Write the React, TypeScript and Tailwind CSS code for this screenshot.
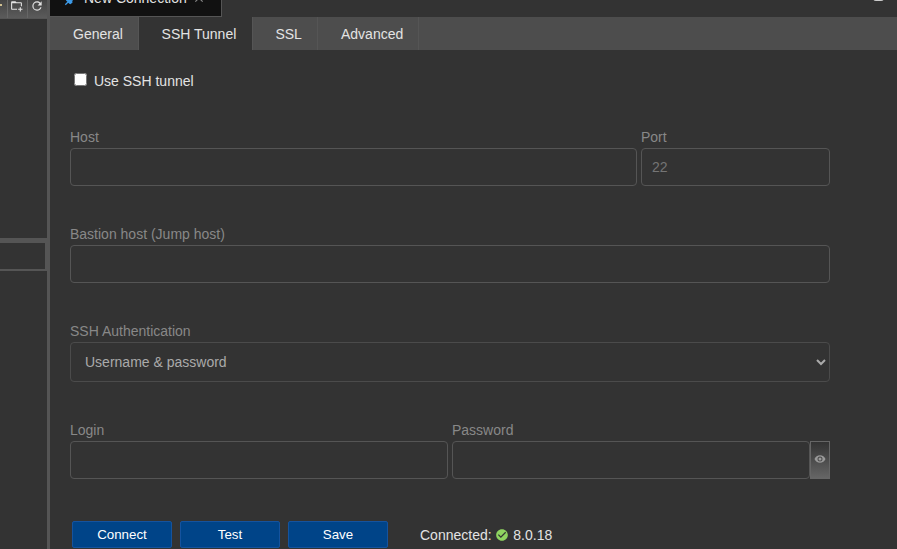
import React from 'react';

const paths = {
  check:
    'M12 2C6.5 2 2 6.5 2 12S6.5 22 12 22 22 17.5 22 12 17.5 2 12 2M10 17L5 12L6.41 10.59L10 14.17L17.59 6.58L19 8L10 17Z',
  eye: 'M12,9A3,3 0 0,0 9,12A3,3 0 0,0 12,15A3,3 0 0,0 15,12A3,3 0 0,0 12,9M12,17A5,5 0 0,1 7,12A5,5 0 0,1 12,7A5,5 0 0,1 17,12A5,5 0 0,1 12,17M12,4.5C7,4.5 2.73,7.61 1,12C2.73,16.39 7,19.5 12,19.5C17,19.5 21.27,16.39 23,12C21.27,7.61 17,4.5 12,4.5Z',
  refresh:
    'M17.65,6.35C16.2,4.9 14.21,4 12,4A8,8 0 0,0 4,12A8,8 0 0,0 12,20C15.73,20 18.84,17.45 19.73,14H17.65C16.83,16.33 14.61,18 12,18A6,6 0 0,1 6,12A6,6 0 0,1 12,6C13.66,6 15.14,6.69 16.22,7.78L13,11H20V4L17.65,6.35Z',
  folderPlus:
    'M13 19C13 19.34 13.04 19.67 13.09 20H4C2.9 20 2 19.11 2 18V6C2 4.89 2.89 4 4 4H10L12 6H20C21.1 6 22 6.89 22 8V13.81C21.39 13.46 20.72 13.22 20 13.09V8H4V18H13.09C13.04 18.33 13 18.66 13 19M20 18V15H18V18H15V20H18V23H20V20H23V18H20Z',
  plug: 'M21.4,7.5C22.2,8.3 22.2,9.6 21.4,10.3L18.6,13.1L10.8,5.3L13.6,2.5C14.4,1.7 15.7,1.7 16.4,2.5L18.2,4.3L21.2,1.3L22.6,2.7L19.6,5.7L21.4,7.5M15.6,13.3L14.2,11.9L11.4,14.7L9.3,12.6L12.1,9.8L10.7,8.4L7.9,11.2L6.4,9.8L3.6,12.6C2.8,13.4 2.8,14.7 3.6,15.4L5.4,17.2L1.4,21.2L2.8,22.6L6.8,18.6L8.6,20.4C9.4,21.2 10.7,21.2 11.4,20.4L14.2,17.6L12.8,16.2L15.6,13.3Z',
  close:
    'M19,6.41L17.59,5L12,10.59L6.41,5L5,6.41L10.59,12L5,17.59L6.41,19L12,13.41L17.59,19L19,17.59L13.41,12L19,6.41Z',
};

function Icon({ name, className }: { name: keyof typeof paths; className: string }) {
  return (
    <svg viewBox="0 0 24 24" fill="currentColor" className={`shrink-0 ${className}`}>
      <path d={paths[name]} />
    </svg>
  );
}

function Field({ label, className, children }: { label: string; className: string; children: React.ReactNode }) {
  return (
    <label className={`flex flex-col ${className}`}>
      <span className="mb-[3px] h-4 leading-4 text-[#888]">{label}</span>
      {children}
    </label>
  );
}

const inputClass =
  'h-[38px] min-w-0 rounded border border-[#555] bg-transparent px-2.5 text-[#e3e3e3] placeholder:text-[#757575] outline-none';

const toolClass =
  'flex h-[18px] shrink-0 items-start justify-center border-r border-[#666] bg-linear-to-b from-[#444] to-[#5b5b5b] text-[#e3e3e3]';

function Sidebar() {
  return (
    <aside className="flex w-[50px] shrink-0 flex-col border-r-3 border-[#555]">
      <div className="flex h-[19px] shrink-0 border-b border-[#555]">
        <div className={`${toolClass} w-[8px] justify-start pt-1`}>
          <span className="size-[2px] bg-[#d0c090]" />
        </div>
        <div className={`${toolClass} w-5`}>
          <Icon name="folderPlus" className="-mt-px -ml-[2px] size-[13px]" />
        </div>
        <div className={`${toolClass} w-[19px] border-r-0`}>
          <Icon name="refresh" className="-mt-[1.5px] -ml-px size-[14px]" />
        </div>
      </div>
      <div className="h-[219px] shrink-0" />
      <div className="h-[5px] shrink-0 bg-[#555]" />
      <div className="h-7 shrink-0 border-r-2 border-b-2 border-[#555]" />
    </aside>
  );
}

const tabs = [
  { label: 'General', width: 'w-[89px]', pad: 'pl-[23px]' },
  { label: 'SSH Tunnel', width: 'w-[114px]', pad: 'pl-[22.6px]', selected: true },
  { label: 'SSL', width: 'w-[65px]', pad: 'pl-[22.4px]' },
  { label: 'Advanced', width: 'w-[101px]', pad: 'pl-[23px]' },
];

export default function App() {
  return (
    <div className="flex h-[549px] w-[897px] overflow-hidden bg-[#333] font-['Liberation_Sans',Arial,sans-serif] text-[14px] text-[#e3e3e3]">
      <Sidebar />
      <main className="flex min-w-0 flex-1 flex-col">
        <div className="flex h-[17px] shrink-0 items-end justify-between overflow-hidden">
          <div className="flex h-8 w-[172px] shrink-0 items-start border-r border-b border-[#555] bg-[#111] pt-[5px] pl-[14px]">
            <Icon name="plug" className="mt-[1px] size-[15px] text-[#3c9ae8]" />
            <span className="ml-[5px] leading-4">New Connection</span>
            <Icon name="close" className="mt-px ml-[5px] size-[14px] text-[#888]" />
          </div>
          <span className="mr-[13px] mb-4 h-[10px] w-[11px] rounded-b-[3px] bg-[#ccc]" />
        </div>
        <nav className="flex h-[33px] shrink-0 bg-[#4d4d4d]">
          {tabs.map((t) => (
            <div
              key={t.label}
              className={`flex items-center border-r border-[#555] pt-[2px] whitespace-nowrap ${t.pad} ${t.width} ${t.selected ? 'bg-[#333]' : ''}`}
            >
              {t.label}
            </div>
          ))}
        </nav>
        <form className="w-[780px] pl-5">
          <label className="mt-[23px] flex h-4 items-center pl-1 leading-4">
            <input type="checkbox" className="-mt-[3px] mr-[7px] size-[13px]" />
            Use SSH tunnel
          </label>
          <div className="mt-10 flex gap-1">
            <Field label="Host" className="w-[567px]">
              <input className={inputClass} />
            </Field>
            <Field label="Port" className="w-[189px]">
              <input className={inputClass} placeholder="22" />
            </Field>
          </div>
          <Field label="Bastion host (Jump host)" className="mt-10">
            <input className={inputClass} />
          </Field>
          <Field label="SSH Authentication" className="mt-10">
            <select className="h-10 rounded border border-[#4b4b4b] bg-[#333] pl-2.5 text-[#aaa] outline-none">
              <option>Username &amp; password</option>
            </select>
          </Field>
          <div className="mt-10 flex gap-1">
            <Field label="Login" className="w-[378px]">
              <input className={inputClass} />
            </Field>
            <Field label="Password" className="w-[378px]">
              <span className="flex">
                <input type="password" className={`${inputClass} w-[358px]`} />
                <button
                  type="button"
                  className="flex h-[38px] w-5 items-center justify-center border border-[#666] bg-linear-to-b from-[#333] to-[#666] pb-[2px] text-[#999]"
                >
                  <Icon name="eye" className="size-[12px]" />
                </button>
              </span>
            </Field>
          </div>
          <div className="mt-[42px] flex h-7 items-start gap-2 pl-[2px]">
            {['Connect', 'Test', 'Save'].map((label) => (
              <button
                key={label}
                type="button"
                className="h-[27px] w-[100px] rounded-[2px] border border-[#15539e] bg-[#048] text-[13.333px] text-white"
              >
                {label}
              </button>
            ))}
            <div className="ml-6 flex h-7 items-center">
              Connected:
              <Icon name="check" className="mr-[4px] ml-[3.7px] size-[14px] text-[#8fd460]" />
              8.0.18
            </div>
          </div>
        </form>
      </main>
    </div>
  );
}
